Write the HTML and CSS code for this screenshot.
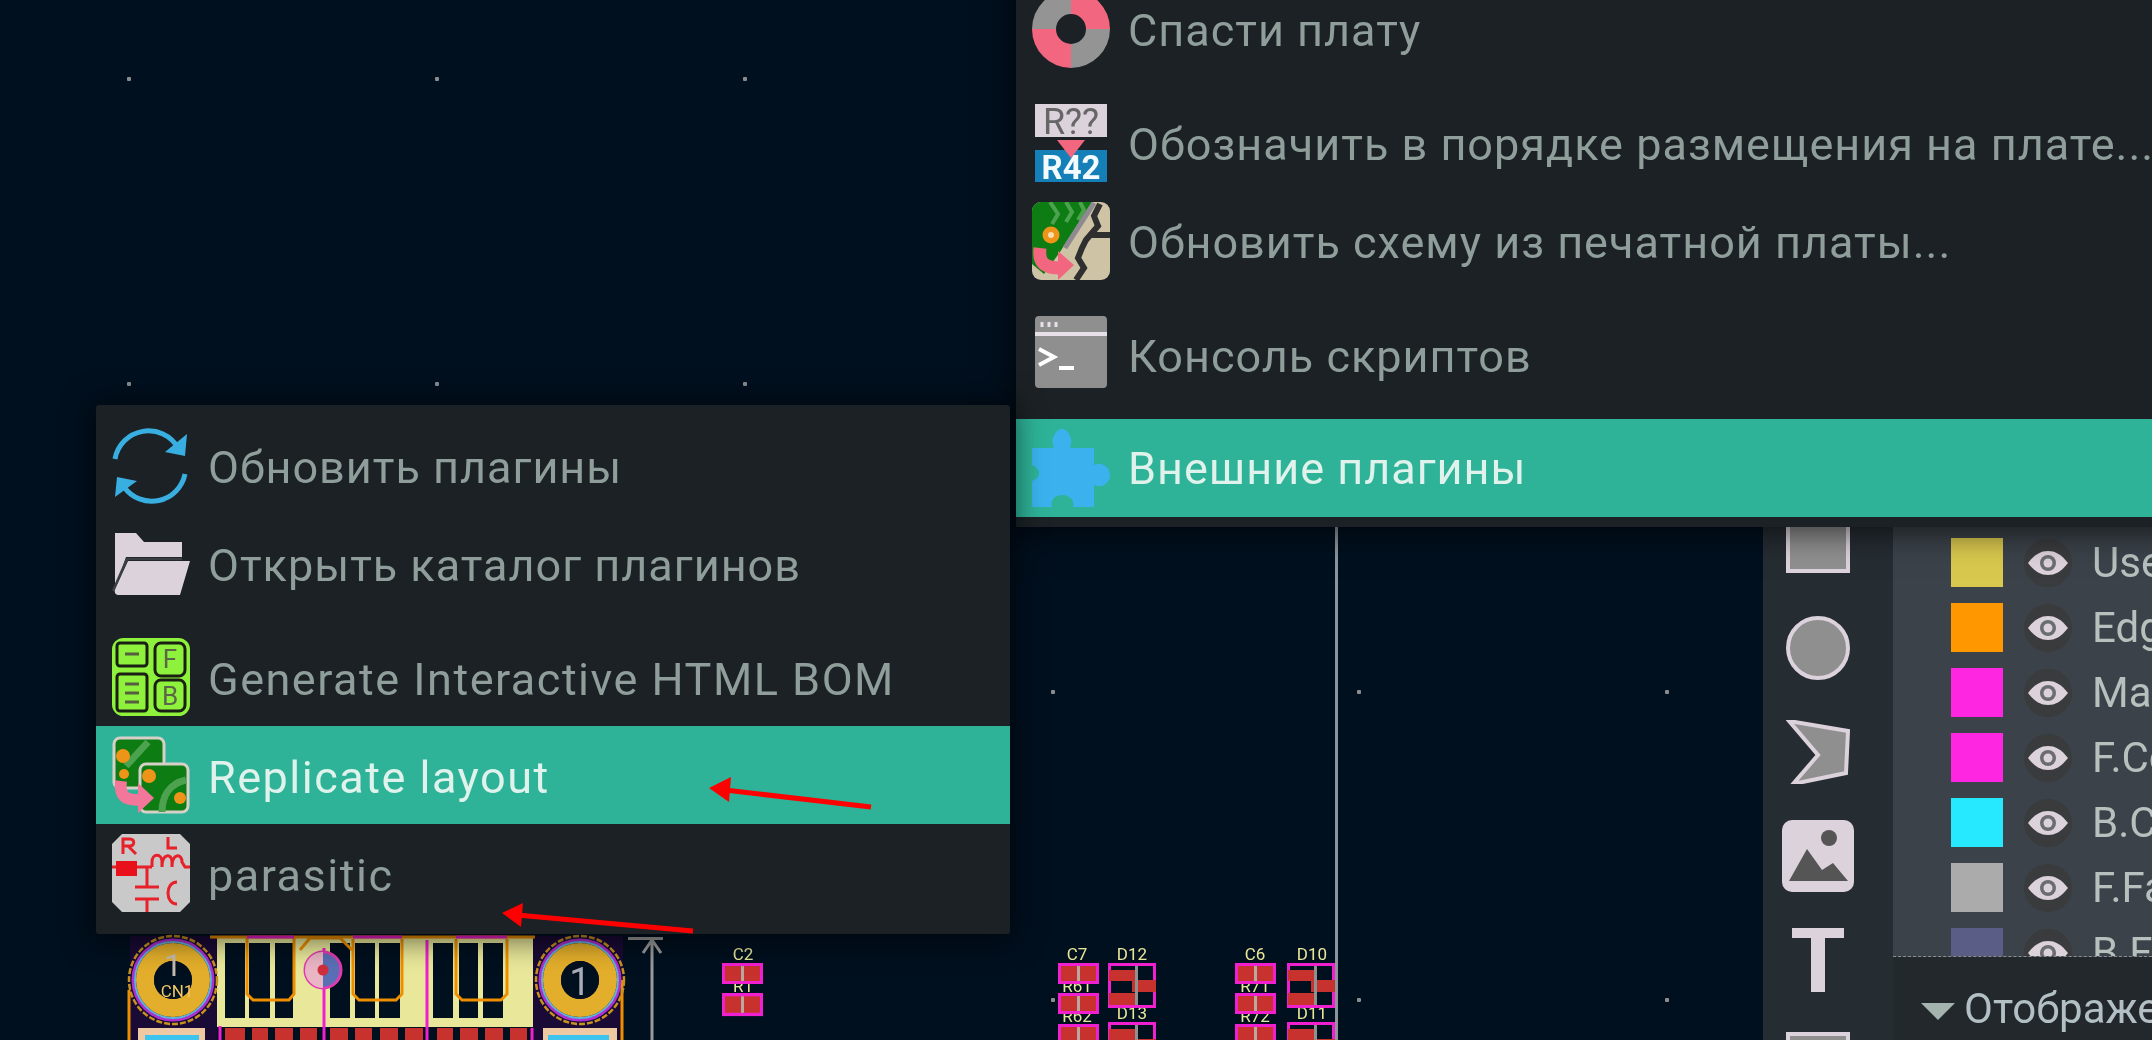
FILE: index.html
```html
<!DOCTYPE html>
<html lang="ru">
<head>
<meta charset="utf-8">
<title>KiCad PCB</title>
<link rel="stylesheet" href="styles.css">
</head>
<body>
<div class="stage">
  <main class="canvas">
    <svg class="board" width="1763" height="1040" viewBox="0 0 1763 1040">
      <defs>
        <g id="dot"><rect x="-2" y="-2" width="4" height="4" rx="1" fill="#8a8d90"/></g>
        <g id="pair">
          <rect x="1.500" y="1.500" width="38" height="18" fill="#c8322e" stroke="#f01fd0" stroke-width="3"/>
          <rect x="19" y="3" width="3" height="15" fill="#b8a8a0"/>
        </g>
        <g id="diode">
          <rect x="1.500" y="1.500" width="45" height="42" fill="none" stroke="#f01fd0" stroke-width="3"/>
          <rect x="1" y="7" width="27" height="11" fill="#c8322e"/>
          <rect x="24" y="17" width="24" height="12" fill="#c8322e"/>
          <rect x="1" y="30" width="27" height="12" fill="#c8322e"/>
          <rect x="27" y="3" width="3" height="39" fill="#8f9090"/>
        </g>
        <g id="hole">
          <circle r="44" fill="none" stroke="#c8921f" stroke-width="2.500" stroke-dasharray="6 2"/>
          <circle r="40" fill="none" stroke="#b02fd0" stroke-width="3"/>
          <circle r="38" fill="none" stroke="#5cb5dc" stroke-width="2"/>
          <circle r="28" fill="none" stroke="#e3ae2b" stroke-width="18"/>
          <circle r="19" fill="#00101f"/>
        </g>
      </defs>
      <g>
        <use href="#dot" x="129" y="79"/><use href="#dot" x="437" y="79"/><use href="#dot" x="745" y="79"/>
        <use href="#dot" x="129" y="384"/><use href="#dot" x="437" y="384"/><use href="#dot" x="745" y="384"/>
        <use href="#dot" x="1053" y="692"/><use href="#dot" x="1359" y="692"/><use href="#dot" x="1667" y="692"/>
        <use href="#dot" x="1053" y="1000"/><use href="#dot" x="1359" y="1000"/><use href="#dot" x="1667" y="1000"/>
      </g>
      <rect x="1335" y="520" width="3" height="520" fill="#8e9498"/>

      <!-- connector footprint -->
      <rect x="130" y="936" width="90" height="104" fill="#1a0a36"/>
      <rect x="533" y="936" width="90" height="104" fill="#1a0a36"/>
      <rect x="217" y="938" width="316" height="90" fill="#e9e89a"/>
      <g fill="#00101f">
        <rect x="225" y="943" width="20" height="75"/><rect x="249" y="943" width="21" height="75"/><rect x="275" y="943" width="18" height="75"/>
        <rect x="330" y="943" width="20" height="75"/><rect x="355" y="943" width="20" height="75"/><rect x="379" y="943" width="21" height="75"/>
        <rect x="433" y="943" width="20" height="75"/><rect x="459" y="943" width="19" height="75"/><rect x="483" y="943" width="20" height="75"/>
        <rect x="217" y="1027" width="316" height="13"/>
      </g>
      <g fill="#c8322e">
        <rect x="225" y="1028" width="20" height="12"/><rect x="252" y="1028" width="16" height="12"/><rect x="275" y="1028" width="18" height="12"/><rect x="300" y="1028" width="17" height="12"/>
        <rect x="330" y="1028" width="18" height="12"/><rect x="355" y="1028" width="17" height="12"/><rect x="380" y="1028" width="18" height="12"/><rect x="405" y="1028" width="18" height="12"/>
        <rect x="437" y="1028" width="16" height="12"/><rect x="460" y="1028" width="18" height="12"/><rect x="485" y="1028" width="18" height="12"/><rect x="510" y="1028" width="17" height="12"/>
      </g>
      <g fill="none" stroke="#ef8f00" stroke-width="3">
        <path d="M129 1040V990"/>
        <path d="M210 937H535"/>
        <path d="M247 937V994L253 1000H289L294 994V937"/>
        <path d="M353 939V994L359 1000H396L402 994V939"/>
        <path d="M456 939V994L462 1000H501L507 994V939"/>
        <path d="M300 950L310 938H340L352 950"/>
        <path d="M622 1040V980"/>
      </g>
      <g fill="none" stroke="#f01fd0" stroke-width="3">
        <path d="M247 937H294M353 937H402M456 937H507"/>
        <path d="M324 948V1040M427 940V1040M220 1026V1040M532 1028V1040"/>
      </g>
      <use href="#hole" x="173" y="980"/>
      <use href="#hole" x="580" y="980"/>
      <circle cx="323" cy="970" r="18" fill="#5a6fb5" stroke="#e23ab0" stroke-width="3"/>
      <path d="M323 952A18 18 0 0 0 323 988Z" fill="#eab5c5"/>
      <circle cx="323" cy="970" r="5.500" fill="#cf2f3a"/>
      <text class="num num-faint" x="173" y="976">1</text>
      <text class="silk-faint" x="177" y="997">CN1</text>
      <text class="num" x="580" y="995">1</text>
      <g>
        <rect x="138" y="1028" width="67" height="12" fill="#efc9a2"/><rect x="145" y="1035" width="54" height="5" fill="#3cc4ef"/>
        <rect x="543" y="1028" width="74" height="12" fill="#efc9a2"/><rect x="548" y="1035" width="61" height="5" fill="#3cc4ef"/>
      </g>
      <path d="M652 1040V940M628 938.500H663M643 953L652 940 661 953" fill="none" stroke="#9a9a9a" stroke-width="3"/>

      <!-- small parts -->
      <g class="silk">
        <text x="743" y="960">C2</text><text x="743" y="992">R1</text>
        <text x="1077" y="960">C7</text><text x="1077" y="992">R61</text><text x="1077" y="1022">R62</text>
        <text x="1132" y="960">D12</text><text x="1132" y="1019">D13</text>
        <text x="1255" y="960">C6</text><text x="1255" y="992">R71</text><text x="1255" y="1022">R72</text>
        <text x="1312" y="960">D10</text><text x="1312" y="1019">D11</text>
      </g>
      <use href="#pair" x="722" y="963"/><use href="#pair" transform="translate(722 993) scale(1 1.1)"/>
      <use href="#pair" x="1058" y="963"/><use href="#pair" x="1058" y="993"/><use href="#pair" x="1058" y="1024"/>
      <use href="#pair" x="1235" y="963"/><use href="#pair" x="1235" y="993"/><use href="#pair" x="1235" y="1024"/>
      <use href="#diode" x="1108" y="963"/><use href="#diode" x="1108" y="1022"/>
      <use href="#diode" x="1287" y="963"/><use href="#diode" x="1287" y="1022"/>
    </svg>
  </main>

  <aside class="toolbar">
    <svg class="tool" viewBox="0 0 64 64"><rect x="2" y="-1" width="60" height="60" fill="#8f8f8f" stroke="#dcd2dc" stroke-width="4"/></svg>
    <svg class="tool" viewBox="0 0 64 64"><circle cx="32" cy="32" r="30" fill="#8f8f8f" stroke="#dcd2dc" stroke-width="4"/></svg>
    <svg class="tool" viewBox="0 0 64 64"><path d="M3 1 62 11 60 53 7 64 32 35Z" fill="#8f8f8f" stroke="#dcd2dc" stroke-width="4"/></svg>
    <svg class="tool tool-wide" viewBox="0 0 72 72"><rect width="72" height="72" rx="10" fill="#dcd2dc"/><circle cx="47" cy="18" r="8" fill="#555"/><path d="M7 61 25 29 40 50 51 43 66 61Z" fill="#555"/></svg>
    <svg class="tool" viewBox="0 0 64 64"><path d="M6 0H58V10H39V64H25V10H6Z" fill="#dcd2dc"/></svg>
    <svg class="tool" viewBox="0 0 64 64"><rect x="2" y="2" width="60" height="60" fill="#8f8f8f" stroke="#dcd2dc" stroke-width="4"/></svg>
  </aside>

  <aside class="panel">
    <div class="layers">
      <div class="layer"><span class="swatch swatch-user"></span><svg class="eye" viewBox="0 0 48 48"><use href="#eye-glyph"/></svg><span class="layer-name">User.Eco2</span></div>
      <div class="layer"><span class="swatch swatch-edge"></span><svg class="eye" viewBox="0 0 48 48"><use href="#eye-glyph"/></svg><span class="layer-name">Edge.Cuts</span></div>
      <div class="layer"><span class="swatch swatch-mag"></span><svg class="eye" viewBox="0 0 48 48"><use href="#eye-glyph"/></svg><span class="layer-name">Margin</span></div>
      <div class="layer"><span class="swatch swatch-mag"></span><svg class="eye" viewBox="0 0 48 48"><use href="#eye-glyph"/></svg><span class="layer-name">F.Courtyard</span></div>
      <div class="layer"><span class="swatch swatch-cyan"></span><svg class="eye" viewBox="0 0 48 48"><use href="#eye-glyph"/></svg><span class="layer-name">B.Courtyard</span></div>
      <div class="layer"><span class="swatch swatch-gray"></span><svg class="eye" viewBox="0 0 48 48"><use href="#eye-glyph"/></svg><span class="layer-name">F.Fab</span></div>
      <div class="layer"><span class="swatch swatch-slate"></span><svg class="eye" viewBox="0 0 48 48"><use href="#eye-glyph"/></svg><span class="layer-name">B.Fab</span></div>
    </div>
    <div class="section"><span class="caret"></span><span class="section-name">Отображение</span></div>
  </aside>
</div>

<svg class="defs" width="0" height="0">
  <defs>
    <g id="eye-glyph">
      <circle cx="24" cy="24" r="24" fill="#3a3b3d"/>
      <path d="M4 24C11 15 17 12 24 12S37 15 44 24C37 33 31 36 24 36S11 33 4 24Z" fill="#dcd2dc"/>
      <circle cx="24" cy="24" r="8" fill="#6a6c70"/>
      <circle cx="24" cy="24" r="4.500" fill="#dcd2dc"/>
    </g>
  </defs>
</svg>

<nav class="menu menu-main">
  <div class="item">
    <svg class="icon icon-up" viewBox="0 0 78 78">
      <path d="M39 0A39 39 0 0 1 78 39H54A15 15 0 0 0 39 24Z" fill="#f2677f"/>
      <path d="M39 78A39 39 0 0 1 0 39H24A15 15 0 0 0 39 54Z" fill="#f2677f"/>
      <path d="M0 39A39 39 0 0 1 39 0V24A15 15 0 0 0 24 39Z" fill="#949494"/>
      <path d="M78 39A39 39 0 0 1 39 78V54A15 15 0 0 0 54 39Z" fill="#949494"/>
    </svg>
    <span class="label">Спасти плату</span>
  </div>
  <div class="sep"></div>
  <div class="item">
    <svg class="icon icon-up" viewBox="0 0 78 78">
      <rect x="3" y="0" width="72" height="33" fill="#dcd2dc"/>
      <rect x="3" y="46" width="72" height="32" fill="#1580b8"/>
      <text x="39" y="30" class="ic-text ic-dark">R??</text>
      <text x="39" y="75" class="ic-text ic-white">R42</text>
      <path d="M25 36H53L39 54Z" fill="#f2677f"/>
    </svg>
    <span class="label">Обозначить в порядке размещения на плате...</span>
  </div>
  <div class="item">
    <svg class="icon icon-up" viewBox="0 0 78 78">
      <rect width="78" height="78" rx="9" fill="#cfc3a6"/>
      <path d="M9 0H60L28 50 12 72 0 62V9A9 9 0 0 1 9 0Z" fill="#0d7c12"/>
      <path d="M18 0 26 12 20 22M34 0 40 10 34 20M48 0 52 8 46 18" fill="none" stroke="#4da24f" stroke-width="4"/>
      <path d="M62 1 33 46" stroke="#8f8a92" stroke-width="5"/>
      <path d="M68 2 62 14 66 24 54 38 50 46 46 56 52 66 44 78M78 33H60" fill="none" stroke="#2f2f2f" stroke-width="6"/>
      <circle cx="19" cy="33" r="8.500" fill="#ee9418"/><circle cx="19" cy="33" r="3" fill="#f5e0b0"/>
      <path d="M8 46C6 62 14 66 28 66" fill="none" stroke="#f2677f" stroke-width="13"/>
      <path d="M26 49 42 63 26 78Z" fill="#f2677f"/>
    </svg>
    <span class="label">Обновить схему из печатной платы...</span>
  </div>
  <div class="sep"></div>
  <div class="item">
    <svg class="icon icon-up" viewBox="0 0 78 78">
      <rect x="3" y="0" width="72" height="72" rx="4" fill="#8f8f8f"/>
      <rect x="3" y="16" width="72" height="4" fill="#e8e0e8"/>
      <path d="M10 6V11M17 6V11M24 6V11" stroke="#e8e0e8" stroke-width="3"/>
      <path d="M7 33 22 41 7 49" fill="none" stroke="#fff" stroke-width="4"/>
      <rect x="27" y="50" width="15" height="4" fill="#fff"/>
    </svg>
    <span class="label">Консоль скриптов</span>
  </div>
  <div class="sep sep-short"></div>
  <div class="item item-active">
    <svg class="icon" viewBox="0 0 78 78">
      <path d="M22 19C18 10 24 0 30 0S42 10 38 19H62V36C70 32 78 38 78 46S70 60 62 56V78H41C43 72 38 66 30 66S18 72 20 78H0V52C5 50 7 47 7 44S5 38 0 36V19Z" fill="#3bb2ee"/>
    </svg>
    <span class="label">Внешние плагины</span>
  </div>
</nav>

<nav class="menu menu-sub">
  <div class="item">
    <svg class="icon icon-up" viewBox="0 0 78 78">
      <path d="M3 32A34 34 0 0 1 66 21" fill="none" stroke="#39aee0" stroke-width="5"/>
      <path d="M75 7 73 29 53 25Z" fill="#39aee0"/>
      <path d="M73 47A34 34 0 0 1 12 60" fill="none" stroke="#39aee0" stroke-width="5"/>
      <path d="M3 70 5 50 25 54Z" fill="#39aee0"/>
    </svg>
    <span class="label">Обновить плагины</span>
  </div>
  <div class="item">
    <svg class="icon icon-up" viewBox="0 0 78 62">
      <path d="M3 0H24L32 9H70V24H14L3 56Z" fill="#dcd2dc"/>
      <path d="M16 28H78L68 62H6C3 62 2 58 3 56Z" fill="#dcd2dc"/>
      <path d="M1 58 15 26H70" fill="none" stroke="#3b3f44" stroke-width="2.500"/>
    </svg>
    <span class="label">Открыть каталог плагинов</span>
  </div>
  <div class="sep sep-short"></div>
  <div class="item">
    <svg class="icon" viewBox="0 0 78 78">
      <rect x="1.500" y="1.500" width="75" height="75" rx="10" fill="#8ef23c" stroke="#8ef23c" stroke-width="3"/>
      <g fill="none" stroke="#1a1f14" stroke-width="3">
        <rect x="5" y="5" width="30" height="23" rx="3"/><rect x="43" y="5" width="30" height="33" rx="6"/>
        <rect x="5" y="36" width="30" height="37" rx="3"/><rect x="43" y="42" width="30" height="31" rx="6"/>
      </g>
      <path d="M13 16H27M13 46H27M13 55H27M13 64H27" stroke="#555e40" stroke-width="3"/>
      <text x="58" y="30" class="ic-small">F</text>
      <text x="58" y="67" class="ic-small">B</text>
    </svg>
    <span class="label label-latin">Generate Interactive HTML BOM</span>
  </div>
  <div class="item item-active">
    <svg class="icon" viewBox="0 0 78 78">
      <rect x="2" y="2" width="50" height="50" rx="6" fill="#0d7c12" stroke="#d8d0c8" stroke-width="3"/>
      <path d="M14 30 36 6" stroke="#4da24f" stroke-width="7"/>
      <circle cx="11" cy="20" r="7" fill="#ee9418"/><circle cx="12" cy="38" r="5" fill="#ee9418"/>
      <rect x="28" y="28" width="48" height="48" rx="6" fill="#0d7c12" stroke="#d8d0c8" stroke-width="3"/>
      <path d="M50 76C50 62 56 48 74 44" fill="none" stroke="#4da24f" stroke-width="7"/>
      <circle cx="37" cy="40" r="7" fill="#ee9418"/><circle cx="68" cy="62" r="6" fill="#ee9418"/>
      <path d="M9 45C7 62 15 64 28 64" fill="none" stroke="#f2779a" stroke-width="12"/>
      <path d="M26 47 42 62 26 77Z" fill="#f2779a"/>
    </svg>
    <span class="label label-latin">Replicate layout</span>
  </div>
  <div class="item">
    <svg class="icon" viewBox="0 0 78 78">
      <path d="M10 0H68L78 10V68L68 78H10L0 68V10Z" fill="#c9c9c9"/>
      <g fill="none" stroke="#e8202a" stroke-width="3">
        <path d="M0 33H40M40 33V28C40 19 50 19 50 28V33C50 19 60 19 60 28V33C60 19 70 19 70 28L73 33H78"/>
        <path d="M35 33V53M23 53H47M23 65H47M35 65V78"/>
        <path d="M65 48C53 48 53 70 65 70"/>
        <path d="M11 20V5H18C23 5 23 12 18 12H12M16 12 24 20"/>
        <path d="M56 3V14H65"/>
      </g>
      <rect x="4" y="27" width="21" height="15" fill="#e8101a"/>
    </svg>
    <span class="label label-latin">parasitic</span>
  </div>
</nav>

<svg class="arrows" width="2152" height="1040" viewBox="0 0 2152 1040">
  <path d="M871 807 725 790" stroke="#ff0000" stroke-width="5"/>
  <path d="M709 788 731 777 729 802Z" fill="#ff0000"/>
  <path d="M693 931 517 915" stroke="#ff0000" stroke-width="5"/>
  <path d="M502 913 523 903 521 927Z" fill="#ff0000"/>
</svg>
</body>
</html>
```

FILE: styles.css
```css
* { box-sizing: border-box; }

html, body {
  margin: 0;
  padding: 0;
  width: 2152px;
  height: 1040px;
  overflow: hidden;
  background: #00101f;
  font-family: Roboto, "Noto Sans", sans-serif;
  filter: blur(0.7px);
}

.stage {
  display: flex;
  width: 2152px;
  height: 1040px;
}

.canvas {
  flex: 1;
  background: #00101f;
  overflow: hidden;
}

.board { display: block; }

.num {
  font-size: 38px;
  fill: #a8adb8;
  text-anchor: middle;
}

.num-faint {
  font-size: 32px;
  fill: #c4bcb0;
}

.silk-faint {
  font-size: 17px;
  fill: #efc868;
  text-anchor: middle;
}

.silk text {
  font-size: 17px;
  fill: #e9e89a;
  text-anchor: middle;
}

.toolbar {
  width: 130px;
  flex: none;
  background: #252c32;
  display: flex;
  flex-direction: column;
  align-items: center;
  gap: 40px;
  padding: 512px 21px 0 0;
  overflow: hidden;
}

.tool {
  width: 64px;
  height: 64px;
  flex: none;
}

.tool-wide {
  width: 72px;
  height: 72px;
  margin: -4px 0;
}

.panel {
  width: 259px;
  flex: none;
  display: flex;
  flex-direction: column;
  overflow: hidden;
}

.layers {
  flex: 1;
  background: #3b4249;
  padding-top: 530px;
  overflow: hidden;
  border-bottom: 1px dashed #8a8f92;
}

.layer {
  height: 65px;
  padding-left: 58px;
  display: flex;
  align-items: center;
  gap: 20px;
  white-space: nowrap;
}

.swatch {
  width: 52px;
  height: 49px;
  flex: none;
}

.swatch-user { background: #d8c84e; }
.swatch-edge { background: #ff9800; }
.swatch-mag { background: #ff26e2; }
.swatch-cyan { background: #26e8ff; }
.swatch-gray { background: #ababab; }
.swatch-slate { background: #5a5e86; }

.eye {
  width: 48px;
  height: 48px;
  flex: none;
  margin-left: 1px;
}

.layer-name {
  font-size: 42px;
  color: #b6c1be;
}

.section {
  height: 83px;
  flex: none;
  background: #22282b;
  display: flex;
  align-items: center;
  padding: 20px 0 0 28px;
  gap: 9px;
  white-space: nowrap;
}

.caret {
  width: 0;
  height: 0;
  flex: none;
  border-left: 17px solid transparent;
  border-right: 17px solid transparent;
  border-top: 17px solid #a5b3af;
  margin-top: 6px;
}

.section-name {
  font-size: 42px;
  color: #b2bfc4;
}

.menu {
  position: absolute;
  background: #1b2124;
  box-shadow: 0 2px 30px 4px rgba(0, 0, 0, 0.6);
  display: flex;
  flex-direction: column;
  z-index: 5;
}

.menu-main {
  left: 1016px;
  top: -17px;
  width: 1200px;
  height: 544px;
}

.menu-sub {
  left: 96px;
  top: 405px;
  width: 914px;
  height: 529px;
  padding-top: 15px;
  border-radius: 3px;
}

.item {
  height: 98px;
  flex: none;
  display: flex;
  align-items: center;
  padding-left: 16px;
  gap: 18px;
  white-space: nowrap;
}

.item-active {
  background: #2eb398;
}

.icon {
  width: 78px;
  height: 78px;
  flex: none;
}

.icon-up {
  margin-bottom: 7px;
}

.label {
  font-size: 45px;
  letter-spacing: 1px;
  line-height: 54px;
  padding-top: 1px;
  color: #8f9e9a;
}

.icon-up + .label {
  padding: 0 0 3px;
}

.label-latin {
  letter-spacing: 1.5px;
  padding-top: 6px;
}

.item-active .label {
  color: #dff2ec;
}

.sep { height: 16px; flex: none; }
.sep-short { height: 12px; }

.ic-text {
  font-size: 36px;
  text-anchor: middle;
  font-family: Roboto, sans-serif;
}

.ic-dark { fill: #666; }
.ic-white { fill: #f4fbff; font-weight: 700; font-size: 33px; }

.ic-small {
  font-size: 26px;
  text-anchor: middle;
  fill: #5a6648;
  font-family: Roboto, sans-serif;
}

.defs { position: absolute; }

.arrows {
  position: absolute;
  left: 0;
  top: 0;
  z-index: 10;
  pointer-events: none;
}
```
